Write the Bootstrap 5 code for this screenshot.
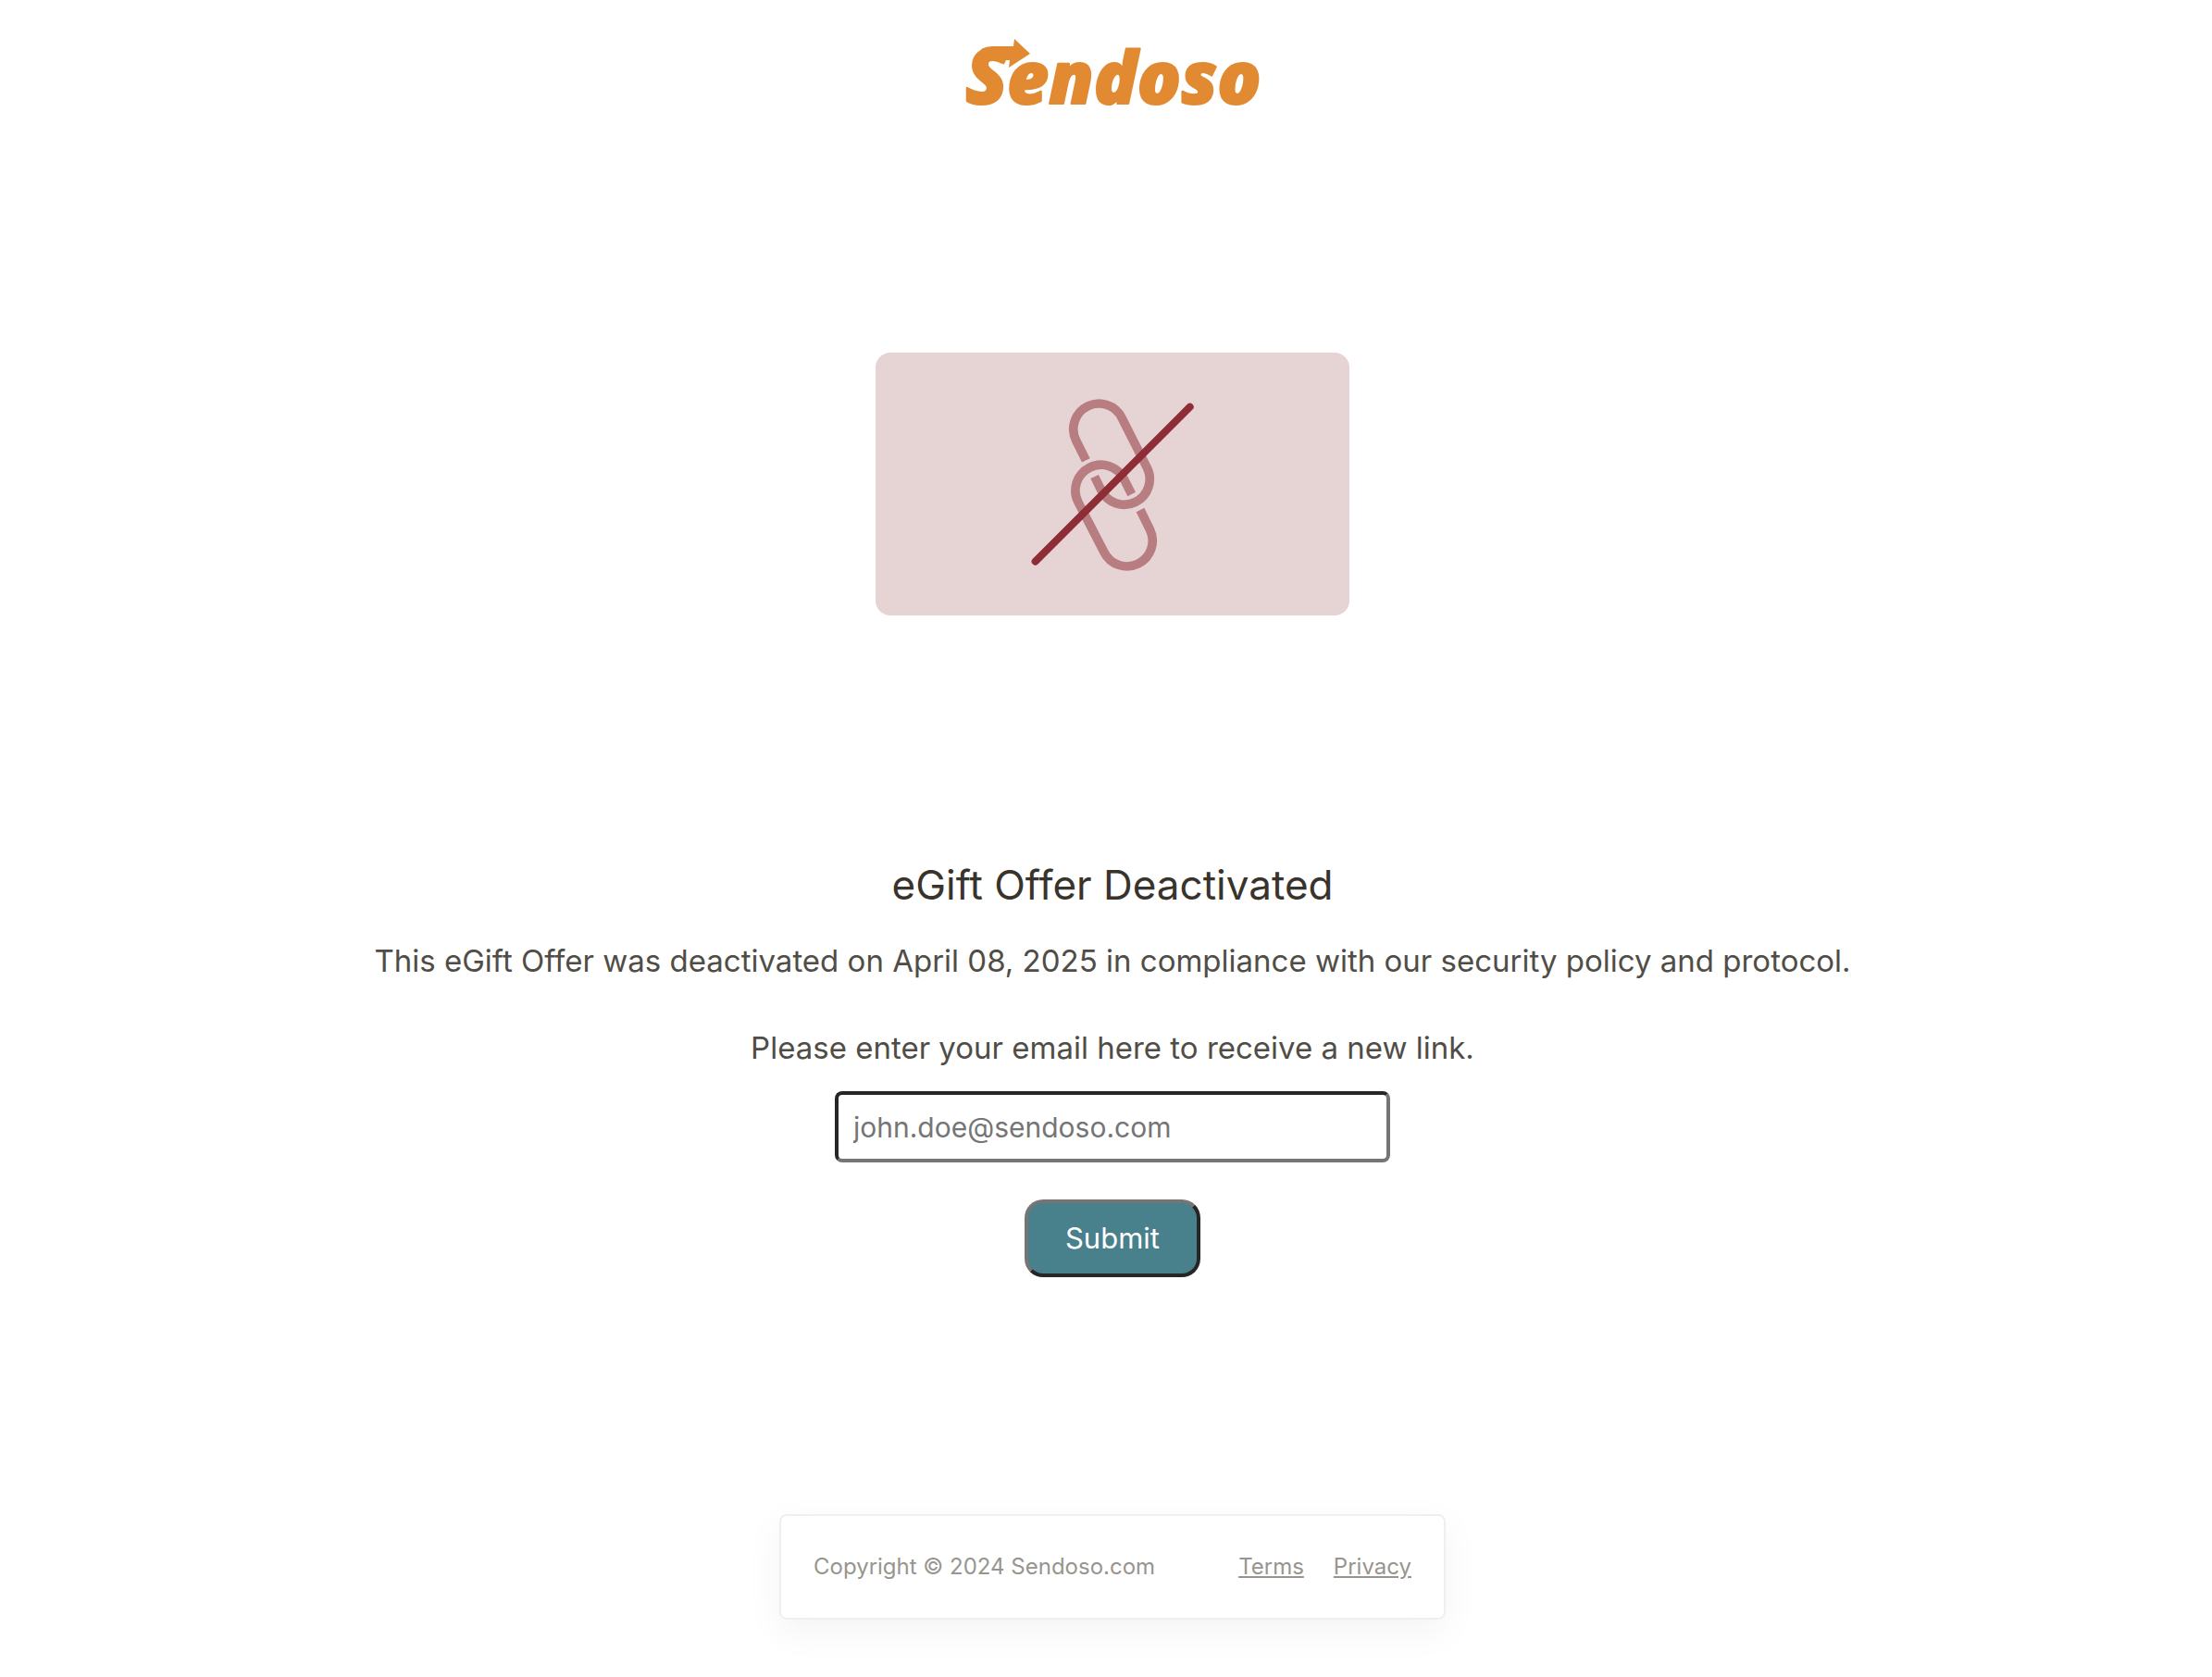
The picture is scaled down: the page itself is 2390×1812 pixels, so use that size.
<!DOCTYPE html>
<html lang="en">
<head>
<meta charset="utf-8">
<meta name="viewport" content="width=device-width, initial-scale=1">
<title>eGift Offer Deactivated</title>
<link href="https://cdn.jsdelivr.net/npm/bootstrap@5.3.0/dist/css/bootstrap.min.css" rel="stylesheet">
<style>
  body { font-family: Inter, "Liberation Sans", sans-serif; color: #504d47; background: #fff; padding-left: 14px; }
  .brand-logo { width: 348px; height: 140px; font-family: "Open Sans", sans-serif; font-weight: 800; font-style: italic; }
  .offer-art { width: 512px; max-width: 100%; height: 284px; margin-top: 241px; border-radius: 16px; background: #e6d4d4; }
  .offer-title { font-size: 44px; line-height: 60px; color: #38342c; margin: 261px 0 30px; font-weight: 400; }
  .offer-text { font-size: 33px; line-height: 44px; }
  .offer-note { margin-bottom: 50px; }
  .offer-prompt { margin-bottom: 25px; }
  .email-box { width: 600px; max-width: 100%; height: 77px; padding: 0 16px; font-size: 30px; border: 4px solid; border-color: #262626 #757575 #757575 #262626; border-radius: 8px; }
  .email-box::placeholder { color: #757575; opacity: 1; }
  .send-btn { width: 190px; height: 84px; margin-top: 40px; font-size: 31px; color: #fff; background: #48808c; border: 4px solid; border-color: #757575 #262626 #262626 #757575; border-radius: 20px; }
  .foot-card { width: 720px; max-width: 100%; height: 114px; margin-top: 256px; padding: 0 35px; border: 2px solid #efefef; border-radius: 8px; box-shadow: 0 12px 40px rgba(0,0,0,.05); font-size: 24px; color: #97958e; }
  .foot-card a { color: #97958e; }
  .foot-links { gap: 32px; }
</style>
</head>
<body>
<div class="d-flex flex-column align-items-center text-center min-vh-100">
  <header>
    <svg class="brand-logo d-block" viewBox="-10 -38 348 140" role="img" aria-label="Sendoso" fill="#e18a32">
      <g stroke="#e18a32" stroke-width="2" stroke-linejoin="round">
        <text x="5" y="74" font-size="84">S</text>
        <text x="50" y="74" font-size="78">endoso</text>
      </g>
      <path d="M22 15Q28 12 34 12H57L58 4L75 20L52 35L53 27H30Z"/>
    </svg>
  </header>
  <main class="d-flex flex-column align-items-center w-100">
    <div class="offer-art d-flex justify-content-center">
      <svg width="224" height="284" viewBox="0 -87 672 852" fill="none" aria-hidden="true">
        <g stroke="#b77d80" stroke-width="29">
          <path d="M250 262L218 198A82 82 0 0 1 366 124L448 286A82 82 0 0 1 300 360L278 315"/>
          <path d="M398 372L373 322A82 82 0 0 0 225 398L309 560A82 82 0 0 0 457 486L426 423"/>
        </g>
        <path d="M86 590L587 89" stroke="#8e2d35" stroke-width="24" stroke-linecap="round"/>
      </svg>
    </div>
    <h1 class="offer-title">eGift Offer Deactivated</h1>
    <p class="offer-text offer-note">This eGift Offer was deactivated on April 08, 2025 in compliance with our security policy and protocol.</p>
    <form class="d-flex flex-column align-items-center">
      <label class="offer-text offer-prompt" for="email">Please enter your email here to receive a new link.</label>
      <input class="email-box" id="email" type="email" placeholder="john.doe@sendoso.com">
      <button class="send-btn" type="submit">Submit</button>
    </form>
  </main>
  <footer class="foot-card d-flex align-items-center justify-content-between">
    <span>Copyright © 2024 Sendoso.com</span>
    <nav class="foot-links d-flex" aria-label="Legal">
      <a href="#terms">Terms</a>
      <a href="#privacy">Privacy</a>
    </nav>
  </footer>
</div>
<script src="https://cdn.jsdelivr.net/npm/bootstrap@5.3.0/dist/js/bootstrap.bundle.min.js"></script>
</body>
</html>
